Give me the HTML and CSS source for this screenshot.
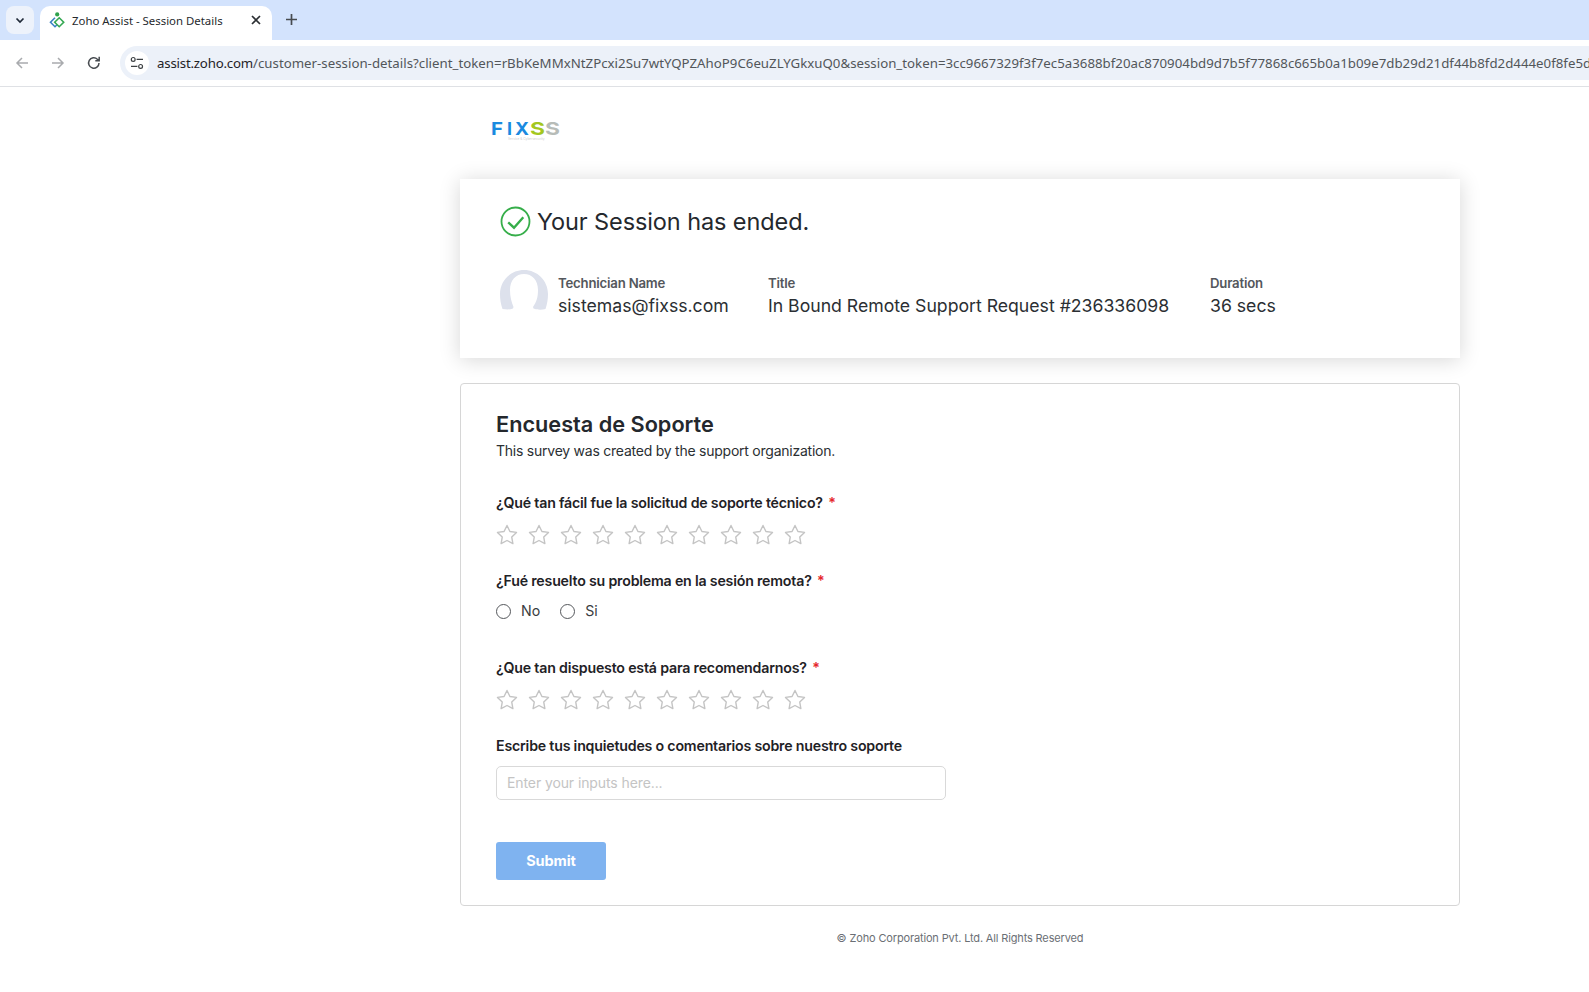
FILE: index.html
```html
<!DOCTYPE html>
<html lang="en">
<head>
<meta charset="utf-8">
<title>Zoho Assist - Session Details</title>
<link rel="stylesheet" href="styles.css">
</head>
<body>
<svg class="defs" width="0" height="0" aria-hidden="true">
  <symbol id="star" viewBox="0 0 22 22">
    <path d="M11 1.500 13.940 7.450 20.510 8.410 15.760 13.050 16.880 19.590 11 16.500 5.120 19.590 6.240 13.050 1.490 8.410 8.060 7.450z" fill="none" stroke="#c4c4c4" stroke-width="1.400" stroke-linejoin="round"/>
  </symbol>
</svg>
<header class="chrome">
  <div class="tabstrip">
    <button class="tab-search"><svg width="12" height="12" viewBox="0 0 12 12"><path d="M2.500 4.500 6 8l3.500-3.500" fill="none" stroke="#1f2937" stroke-width="1.700"/></svg></button>
    <div class="tab">
      <svg class="favicon" width="16" height="16" viewBox="0 0 16 16">
        <circle cx="8.200" cy="2.400" r="2.100" fill="#2fa24d"/>
        <path d="M6 5.800 1.500 10.200 6 14.700 8 12.700" fill="none" stroke="#3b82c4" stroke-width="1.600"/>
        <path d="M10.200 5.800 14.700 10.200 10.200 14.700 5.700 10.200z" fill="none" stroke="#35a853" stroke-width="1.600"/>
      </svg>
      <span class="tab-title">Zoho Assist - Session Details</span>
      <svg class="tab-close" width="10" height="10" viewBox="0 0 10 10"><path d="M1 1l8 8M9 1l-8 8" stroke="#2b2f33" stroke-width="1.700"/></svg>
    </div>
    <svg class="tab-new" width="13" height="13" viewBox="0 0 13 13"><path d="M6.500 1v11M1 6.500h11" stroke="#474b50" stroke-width="1.700"/></svg>
  </div>
  <div class="toolbar">
    <svg class="nav-icon" width="16" height="16" viewBox="0 0 16 16"><path d="M14 8H3M8 3 3 8l5 5" fill="none" stroke="#a9abae" stroke-width="1.500"/></svg>
    <svg class="nav-icon" width="16" height="16" viewBox="0 0 16 16"><path d="M2 8h11M8 3l5 5-5 5" fill="none" stroke="#a9abae" stroke-width="1.500"/></svg>
    <svg class="nav-icon" width="16" height="16" viewBox="0 0 16 16"><path d="M13 8a5.200 5.200 0 1 1-1.600-3.800L13 5.600M13.200 1.800v3.900H9.300" fill="none" stroke="#474b50" stroke-width="1.500"/></svg>
    <div class="omnibox">
      <span class="site-info"><svg width="14" height="14" viewBox="0 0 14 14"><circle cx="3.200" cy="3.400" r="1.900" fill="none" stroke="#3c4043" stroke-width="1.200"/><path d="M6.600 3.400H13M1 10.400h6.400" stroke="#3c4043" stroke-width="1.400"/><circle cx="10.600" cy="10.400" r="1.900" fill="none" stroke="#3c4043" stroke-width="1.200"/></svg></span>
      <span class="url"><span class="url-host">assist.zoho.com</span>/customer-session-details?client_token=rBbKeMMxNtZPcxi2Su7wtYQPZAhoP9C6euZLYGkxuQ0&amp;session_token=3cc9667329f3f7ec5a3688bf20ac870904bd9d7b5f77868c665b0a1b09e7db29d21df44b8fd2d444e0f8fe5d1</span>
    </div>
  </div>
</header>
<main class="page">
  <div class="logo">
    <svg width="90" height="26" viewBox="0 0 90 26">
      <text x="0" y="15" class="logo-text logo-blue" textLength="12" lengthAdjust="spacingAndGlyphs">F</text>
      <text x="16" y="15" class="logo-text logo-blue" textLength="5" lengthAdjust="spacingAndGlyphs">I</text>
      <text x="24" y="15" class="logo-text logo-blue" textLength="14" lengthAdjust="spacingAndGlyphs">X</text>
      <text x="39" y="15" class="logo-text logo-green" textLength="15" lengthAdjust="spacingAndGlyphs">S</text>
      <text x="54" y="15" class="logo-text logo-grey" textLength="15" lengthAdjust="spacingAndGlyphs">S</text>
      <text x="17" y="20" class="logo-tag">Service &amp; Cybersecurity</text>
    </svg>
  </div>
  <section class="summary">
    <h1 class="summary-title">
      <svg width="31" height="31" viewBox="0 0 31 31"><circle cx="15.500" cy="15.500" r="14" fill="none" stroke="#36ae4a" stroke-width="1.800"/><path d="M8.200 16.300l5.800 5.400 9.300-10.400" fill="none" stroke="#36ae4a" stroke-width="2.400"/></svg>
      Your Session has ended.
    </h1>
    <div class="details">
      <svg class="avatar" width="48" height="40" viewBox="0 0 48 40"><path d="M24 0C10.700 0 0 10.700 0 24c0 5.500.8 10 2.500 15 3.500.5 7 1 10.500-.5L13.500 37C11.500 32 10 27 10 20 10 10 16 4 24 4s14 6 14 16c0 7-1.500 12-5 17l.5 1.500c3.500 1.500 8.500 1.500 12 .5C47.200 34 48 29 48 24 48 10.700 37.300 0 24 0z" fill="#dde1ec"/></svg>
      <div class="detail detail-tech">
        <div class="detail-label">Technician Name</div>
        <div class="detail-value">sistemas@fixss.com</div>
      </div>
      <div class="detail detail-title">
        <div class="detail-label">Title</div>
        <div class="detail-value">In Bound Remote Support Request #236336098</div>
      </div>
      <div class="detail">
        <div class="detail-label">Duration</div>
        <div class="detail-value">36 secs</div>
      </div>
    </div>
  </section>
  <section class="survey">
    <h2 class="survey-title">Encuesta de Soporte</h2>
    <p class="survey-sub">This survey was created by the support organization.</p>
    <div class="question q1">
      <div class="q-label">¿Qué tan fácil fue la solicitud de soporte técnico? <span class="req">*</span></div>
      <div class="stars">
        <svg><use href="#star"/></svg><svg><use href="#star"/></svg><svg><use href="#star"/></svg><svg><use href="#star"/></svg><svg><use href="#star"/></svg><svg><use href="#star"/></svg><svg><use href="#star"/></svg><svg><use href="#star"/></svg><svg><use href="#star"/></svg><svg><use href="#star"/></svg>
      </div>
    </div>
    <div class="question q2">
      <div class="q-label">¿Fué resuelto su problema en la sesión remota? <span class="req">*</span></div>
      <div class="radios">
        <span class="radio"><i class="radio-dot"></i>No</span>
        <span class="radio"><i class="radio-dot"></i>Si</span>
      </div>
    </div>
    <div class="question q3">
      <div class="q-label">¿Que tan dispuesto está para recomendarnos? <span class="req">*</span></div>
      <div class="stars">
        <svg><use href="#star"/></svg><svg><use href="#star"/></svg><svg><use href="#star"/></svg><svg><use href="#star"/></svg><svg><use href="#star"/></svg><svg><use href="#star"/></svg><svg><use href="#star"/></svg><svg><use href="#star"/></svg><svg><use href="#star"/></svg><svg><use href="#star"/></svg>
      </div>
    </div>
    <div class="question q4">
      <div class="q-label">Escribe tus inquietudes o comentarios sobre nuestro soporte</div>
      <input class="text-input" type="text" placeholder="Enter your inputs here...">
    </div>
    <button class="submit">Submit</button>
  </section>
  <footer class="copyright">© Zoho Corporation Pvt. Ltd. All Rights Reserved</footer>
</main>
</body>
</html>
```
FILE: styles.css
```css
* { box-sizing: border-box; }
html, body { margin: 0; padding: 0; overflow: hidden; height: 100%; }
body { background: #fff; font-family: Inter, "Liberation Sans", sans-serif; color: #24282d; }
.defs { position: absolute; }
.chrome { height: 87px; }
.tabstrip { height: 40px; background: #d3e3fd; display: flex; align-items: flex-end; }
.tab-search { width: 28px; height: 28px; margin: 0 6px 6px 6px; border: 0; border-radius: 8px; background: #edf2fb; display: flex; align-items: center; justify-content: center; padding: 0; }
.tab { width: 232px; height: 34px; background: #fff; border-radius: 10px 10px 0 0; display: flex; align-items: center; padding: 0 11px 6px 9px; }
.favicon { flex: none; }
.tab-title { font: 11.400px "Noto Sans", "Open Sans", sans-serif; color: #26292d; margin-left: 7px; flex: 1; white-space: nowrap; }
.tab-new { margin: 0 0 14px 13px; }
.toolbar { height: 47px; background: #fff; border-bottom: 1px solid #dfe1e5; border-radius: 8px 0 0 0; display: flex; align-items: center; padding: 0 0 1px 14px; gap: 20px; }
.nav-icon { flex: none; }
.omnibox { flex: 1; min-width: 0; height: 34px; margin-left: -2px; background: #ecf1f9; border-radius: 17px 0 0 17px; display: flex; align-items: center; padding-left: 5px; overflow: hidden; }
.site-info { flex: none; width: 24px; height: 24px; border-radius: 50%; background: #fff; display: flex; align-items: center; justify-content: center; }
.url { margin-left: 8px; font: 13.250px "Noto Sans", "Open Sans", sans-serif; letter-spacing: 0.015px; color: #52565a; white-space: nowrap; }
.url-host { color: #1f2226; letter-spacing: -0.2px; }
.page { width: 1000px; margin-left: 460px; }
.logo { height: 92px; padding: 33px 0 0 31px; }
.logo svg { display: block; overflow: visible; }
.logo-text { font: 700 18px Inter, sans-serif; }
.logo-blue { fill: #1a8ae0; }
.logo-green { fill: #a4c71f; }
.logo-grey { fill: #b7bcb8; }
.logo-tag { font: 3.200px Inter, sans-serif; fill: #d0d0d0; }
.summary { height: 179px; padding: 27px 40px 0; background: #fff; box-shadow: 0 2px 20px rgba(0,0,0,.16); }
.summary-title { margin: 0; display: flex; align-items: center; gap: 6px; font-size: 23.500px; font-weight: 400; letter-spacing: -0.1px; line-height: 31px; color: #24282d; }
.details { display: flex; margin-top: 28px; }
.avatar { flex: none; margin: 5px 10px 0 0; }
.detail-tech { width: 210px; }
.detail-title { width: 442px; }
.detail-label { font-size: 13.200px; font-weight: 600; letter-spacing: -0.2px; color: #54575c; line-height: 18px; margin-top: 9px; }
.detail-value { font-size: 17.650px; line-height: 27px; color: #2b2f33; }
.survey { height: 523px; margin-top: 25px; padding: 26px 35px; border: 1px solid #d6d6d6; border-radius: 4px; }
.survey-title { margin: 0; font-size: 21.700px; font-weight: 600; line-height: 28px; color: #24282d; }
.survey-sub { margin: 3px 0 0; font-size: 14px; letter-spacing: -0.24px; line-height: 20px; color: #2b2f33; }
.question { display: block; }
.q1 { margin-top: 32px; }
.q2 { margin-top: 25px; }
.q3 { margin-top: 38px; }
.q4 { margin-top: 25px; }
.q-label { font-size: 14.200px; font-weight: 600; letter-spacing: -0.2px; line-height: 20px; color: #1f2226; }
.req { color: #e5262b; margin-left: 2px; }
.stars { display: flex; margin-top: 11px; gap: 10px; height: 22px; }
.stars svg { width: 22px; height: 22px; flex: none; }
.radios { display: flex; margin-top: 9px; gap: 20px; height: 20px; align-items: center; }
.radio { display: flex; align-items: center; font-size: 14.200px; color: #3a3d41; }
.radio-dot { width: 15px; height: 15px; margin-top: 2px; border: 1px solid #55585c; border-radius: 50%; margin-right: 10px; }
.text-input { display: block; width: 450px; height: 34px; margin-top: 10px; padding: 0 10px 2px; border: 1px solid #d9d9d9; border-radius: 5px; font: 14px Inter, sans-serif; letter-spacing: -0.1px; }
.text-input::placeholder { color: #c4c4c4; opacity: 1; }
.submit { display: block; width: 110px; height: 38px; margin-top: 42px; padding: 0 0 2px; border: 0; border-radius: 3px; background: #7fb3f0; color: #fff; font: 700 14.500px Inter, sans-serif; letter-spacing: -0.1px; }
.copyright { margin-top: 24px; text-align: center; font-size: 11px; letter-spacing: -0.15px; line-height: 16px; color: #6b6f75; }
```
